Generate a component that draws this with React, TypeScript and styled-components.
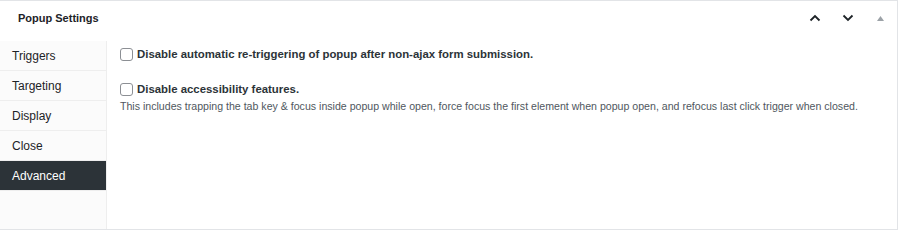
import React from "react";
import styled, { createGlobalStyle } from "styled-components";

const GlobalStyle = createGlobalStyle`
  body {
    margin: 0;
    background: #fff;
    font-family: "Liberation Sans", Arial, sans-serif;
    color: #1d2327;
  }
`;

const Box = styled.div`
  width: 897px;
  height: 228px;
  border: 1px solid #e2e4e7;
  border-left: none;
  background: #fff;
  display: flex;
  flex-direction: column;
`;

const Header = styled.div`
  height: 34px;
  padding: 0 0 6px 18px;
  display: flex;
  align-items: center;
`;

const Title = styled.h2`
  margin: 0;
  flex: 1;
  font-size: 11px;
  font-weight: 700;
  color: #1d2327;
`;

const Handles = styled.div`
  display: flex;
  align-items: center;
`;

const HandleButton = styled.button<{ $muted?: boolean }>`
  width: 33px;
  height: 34px;
  border: none;
  background: none;
  padding: 0;
  display: flex;
  align-items: center;
  justify-content: center;
  color: ${(p) => (p.$muted ? "#9ca2a7" : "#1d2327")};
`;

const Body = styled.div`
  flex: 1;
  display: flex;
`;

const Sidebar = styled.ul`
  width: 106px;
  margin: 0;
  padding: 0;
  list-style: none;
  background: #fbfbfb;
  border-right: 1px solid #eeeeee;
`;

const Tab = styled.li<{ $active?: boolean }>`
  height: 29px;
  line-height: 30px;
  padding-left: 12px;
  font-size: 12px;
  border-bottom: 1px solid #eeeeee;
  background: ${(p) => (p.$active ? "#2c3338" : "transparent")};
  color: ${(p) => (p.$active ? "#fff" : "#1d2327")};
`;

const Content = styled.div`
  flex: 1;
  padding: 5px 13px;
`;

const Field = styled.div`
  margin-bottom: 19px;
`;

const CheckRow = styled.label`
  display: flex;
  align-items: center;
  gap: 4px;
  font-size: 11.4px;
  font-weight: 700;
  color: #2c3338;
  height: 16px;
`;

const Check = styled.span`
  width: 11px;
  height: 11px;
  border: 1px solid #8c8f94;
  border-radius: 3px;
  background: #fff;
  flex-shrink: 0;
`;

const Desc = styled.p`
  margin: 3px 0 0;
  font-size: 10.6px;
  color: #50575e;
`;

const Chevron = ({ up }: { up?: boolean }) => (
  <svg width="12" height="8" viewBox="0 0 12 8">
    <path
      d={up ? "M1.5 6.5 L6 2 L10.5 6.5" : "M1.5 1.5 L6 6 L10.5 1.5"}
      fill="none"
      stroke="currentColor"
      strokeWidth="1.8"
    />
  </svg>
);

const tabs = ["Triggers", "Targeting", "Display", "Close", "Advanced"];

export default function App() {
  return (
    <>
      <GlobalStyle />
      <Box>
        <Header>
          <Title>Popup Settings</Title>
          <Handles>
            <HandleButton>
              <Chevron up />
            </HandleButton>
            <HandleButton>
              <Chevron />
            </HandleButton>
            <HandleButton $muted>
              <svg width="7" height="5" viewBox="0 0 7 5">
                <path d="M3.5 0 L7 5 L0 5 Z" fill="currentColor" />
              </svg>
            </HandleButton>
          </Handles>
        </Header>
        <Body>
          <Sidebar>
            {tabs.map((t) => (
              <Tab key={t} $active={t === "Advanced"}>
                {t}
              </Tab>
            ))}
          </Sidebar>
          <Content>
            <Field>
              <CheckRow>
                <Check />
                Disable automatic re-triggering of popup after non-ajax form submission.
              </CheckRow>
            </Field>
            <Field>
              <CheckRow>
                <Check />
                Disable accessibility features.
              </CheckRow>
              <Desc>
                This includes trapping the tab key &amp; focus inside popup while open, force focus the first element when popup open, and refocus last click trigger when closed.
              </Desc>
            </Field>
          </Content>
        </Body>
      </Box>
    </>
  );
}
